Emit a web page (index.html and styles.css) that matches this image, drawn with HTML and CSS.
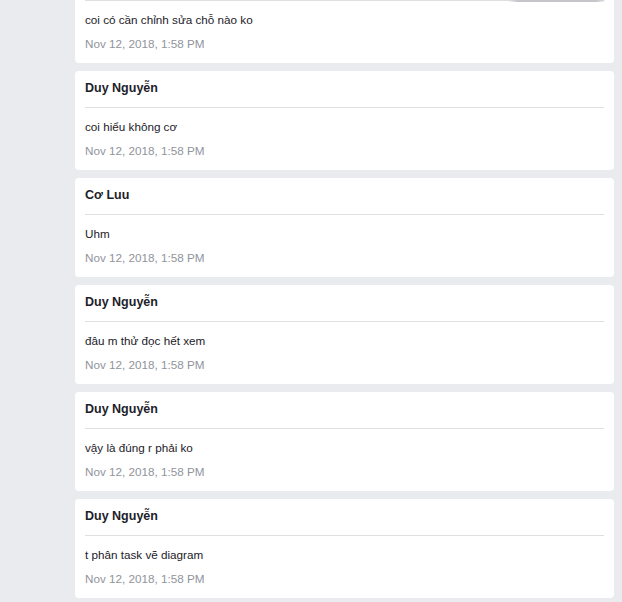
FILE: index.html
```html
<!DOCTYPE html>
<html lang="vi">
<head>
<meta charset="utf-8">
<link rel="stylesheet" href="styles.css">
</head>
<body>
<div class="top-shadow"></div>
<main class="feed">
  <article class="card">
    <header class="card-head" aria-hidden="true"></header>
    <div class="card-body">
      <p class="msg">coi có cần chỉnh sửa chỗ nào ko</p>
      <time class="date">Nov 12, 2018, 1:58 PM</time>
    </div>
  </article>
  <article class="card">
    <header class="card-head">Duy Nguyễn</header>
    <div class="card-body">
      <p class="msg">coi hiểu không cơ</p>
      <time class="date">Nov 12, 2018, 1:58 PM</time>
    </div>
  </article>
  <article class="card">
    <header class="card-head">Cơ Luu</header>
    <div class="card-body">
      <p class="msg">Uhm</p>
      <time class="date">Nov 12, 2018, 1:58 PM</time>
    </div>
  </article>
  <article class="card">
    <header class="card-head">Duy Nguyễn</header>
    <div class="card-body">
      <p class="msg">đâu m thử đọc hết xem</p>
      <time class="date">Nov 12, 2018, 1:58 PM</time>
    </div>
  </article>
  <article class="card">
    <header class="card-head">Duy Nguyễn</header>
    <div class="card-body">
      <p class="msg">vậy là đúng r phải ko</p>
      <time class="date">Nov 12, 2018, 1:58 PM</time>
    </div>
  </article>
  <article class="card">
    <header class="card-head">Duy Nguyễn</header>
    <div class="card-body">
      <p class="msg">t phân task vẽ diagram</p>
      <time class="date">Nov 12, 2018, 1:58 PM</time>
    </div>
  </article>
</main>
</body>
</html>
```

FILE: styles.css
```css
html, body {
  margin: 0;
  padding: 0;
  background: #e9ebee;
  font-family: "Liberation Sans", Arial, sans-serif;
  font-size: 11.7px;
  color: #1d2129;
  overflow: hidden;
  height: 602px;
}

.top-shadow {
  position: absolute;
  top: 0;
  left: 508px;
  width: 98px;
  height: 2px;
  background: linear-gradient(to right, rgba(200,202,206,0) 0%, #c4c6ca 10%, #c4c6ca 90%, rgba(200,202,206,0) 100%);
  z-index: 2;
}

.feed {
  display: flex;
  flex-direction: column;
  gap: 8px;
  margin: -36px 8px 0 75px;
  width: 539px;
}

.card {
  background: #fff;
  border-radius: 4px;
  padding: 0 10px;
}

.card-head {
  font-weight: bold;
  font-size: 12.5px;
  line-height: 16px;
  height: 16px;
  padding: 9px 0 11px;
  border-bottom: 1px solid #dddfe2;
}

.card-body {
  display: flex;
  flex-direction: column;
  gap: 8px;
  padding: 11px 0 11px;
}

.msg {
  margin: 0;
  line-height: 16px;
}

.date {
  display: block;
  color: #90949c;
  line-height: 16px;
}
```
